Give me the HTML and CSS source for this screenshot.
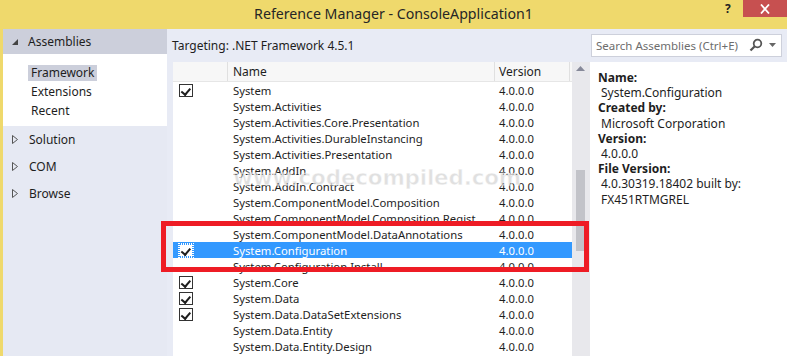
FILE: index.html
```html
<!DOCTYPE html>
<html>
<head>
<meta charset="utf-8">
<link rel="stylesheet" href="styles.css">
</head>
<body>
<div class="window">
  <div class="titlebar">
    <div class="title">Reference Manager - ConsoleApplication1</div>
    <div class="help">?</div>
    <div class="close">
      <svg width="12" height="10" viewBox="0 0 12 10"><path d="M2 0.5 L10 9.5 M10 0.5 L2 9.5" stroke="#fff" stroke-width="1.8"/></svg>
    </div>
  </div>
  <div class="main">
    <div class="sidebar">
      <div class="group-head"><span class="tri-down"></span>Assemblies</div>
      <div class="group-body">
        <div class="sub"><span class="sub-sel">Framework</span></div>
        <div class="sub"><span>Extensions</span></div>
        <div class="sub"><span>Recent</span></div>
      </div>
      <div class="group"><svg class="tri-right" width="6" height="9" viewBox="0 0 6 9"><path d="M0.5 0.5 L5.5 4.5 L0.5 8.5 Z" fill="none" stroke="#555" stroke-width="1"/></svg>Solution</div>
      <div class="group"><svg class="tri-right" width="6" height="9" viewBox="0 0 6 9"><path d="M0.5 0.5 L5.5 4.5 L0.5 8.5 Z" fill="none" stroke="#555" stroke-width="1"/></svg>COM</div>
      <div class="group"><svg class="tri-right" width="6" height="9" viewBox="0 0 6 9"><path d="M0.5 0.5 L5.5 4.5 L0.5 8.5 Z" fill="none" stroke="#555" stroke-width="1"/></svg>Browse</div>
    </div>
    <div class="center">
      <div class="topbar">
        <div class="targeting">Targeting: .NET Framework 4.5.1</div>
        <div class="search">
          <span class="placeholder">Search Assemblies (Ctrl+E)</span>
          <svg class="mag" width="14" height="14" viewBox="0 0 14 14"><circle cx="8.5" cy="5.5" r="3.8" fill="none" stroke="#555" stroke-width="1.8"/><path d="M5.8 8.2 L1.5 12.5" stroke="#555" stroke-width="2.2"/></svg>
          <svg class="drop" width="7" height="4" viewBox="0 0 7 4"><path d="M0 0 H7 L3.5 4 Z" fill="#666"/></svg>
        </div>
      </div>
      <div class="content">
        <div class="list">
          <div class="row head">
            <div class="c-check"></div>
            <div class="c-name">Name</div>
            <div class="c-ver">Version</div>
            <div class="c-rest"></div>
          </div>
          <div class="row"><div class="c-check"><span class="cb on"></span></div><div class="c-name">System</div><div class="c-ver">4.0.0.0</div></div>
          <div class="row"><div class="c-check"></div><div class="c-name">System.Activities</div><div class="c-ver">4.0.0.0</div></div>
          <div class="row"><div class="c-check"></div><div class="c-name">System.Activities.Core.Presentation</div><div class="c-ver">4.0.0.0</div></div>
          <div class="row"><div class="c-check"></div><div class="c-name">System.Activities.DurableInstancing</div><div class="c-ver">4.0.0.0</div></div>
          <div class="row"><div class="c-check"></div><div class="c-name">System.Activities.Presentation</div><div class="c-ver">4.0.0.0</div></div>
          <div class="row"><div class="c-check"></div><div class="c-name">System.AddIn</div><div class="c-ver">4.0.0.0</div></div>
          <div class="row"><div class="c-check"></div><div class="c-name">System.AddIn.Contract</div><div class="c-ver">4.0.0.0</div></div>
          <div class="row"><div class="c-check"></div><div class="c-name">System.ComponentModel.Composition</div><div class="c-ver">4.0.0.0</div></div>
          <div class="row"><div class="c-check"></div><div class="c-name">System.ComponentModel.Composition.Regist</div><div class="c-ver">4.0.0.0</div></div>
          <div class="row"><div class="c-check"></div><div class="c-name">System.ComponentModel.DataAnnotations</div><div class="c-ver">4.0.0.0</div></div>
          <div class="row sel"><div class="c-check"><span class="cb focus"></span></div><div class="c-name">System.Configuration</div><div class="c-ver">4.0.0.0</div></div>
          <div class="row"><div class="c-check"></div><div class="c-name">System.Configuration.Install</div><div class="c-ver">4.0.0.0</div></div>
          <div class="row"><div class="c-check"><span class="cb on"></span></div><div class="c-name">System.Core</div><div class="c-ver">4.0.0.0</div></div>
          <div class="row"><div class="c-check"><span class="cb on"></span></div><div class="c-name">System.Data</div><div class="c-ver">4.0.0.0</div></div>
          <div class="row"><div class="c-check"><span class="cb on"></span></div><div class="c-name">System.Data.DataSetExtensions</div><div class="c-ver">4.0.0.0</div></div>
          <div class="row"><div class="c-check"></div><div class="c-name">System.Data.Entity</div><div class="c-ver">4.0.0.0</div></div>
          <div class="row"><div class="c-check"></div><div class="c-name">System.Data.Entity.Design</div><div class="c-ver">4.0.0.0</div></div>
        </div>
        <div class="scrollbar">
          <svg class="up" width="9" height="5" viewBox="0 0 9 5"><path d="M0 5 L4.5 0 L9 5 Z" fill="#868999"/></svg>
          <div class="thumb"></div>
        </div>
        <div class="details">
          <div class="lbl">Name:</div>
          <div class="val">System.Configuration</div>
          <div class="lbl">Created by:</div>
          <div class="val">Microsoft Corporation</div>
          <div class="lbl">Version:</div>
          <div class="val">4.0.0.0</div>
          <div class="lbl">File Version:</div>
          <div class="val">4.0.30319.18402 built by:<br>FX451RTMGREL</div>
        </div>
      </div>
    </div>
  </div>
  <div class="watermark">www.codecompiled.com</div>
  <div class="redbox"></div>
</div>
</body>
</html>
```
FILE: styles.css
```css
* { box-sizing: border-box; }
html, body { margin: 0; padding: 0; }
body {
  width: 787px;
  height: 356px;
  overflow: hidden;
  font-family: "Noto Sans", "Open Sans", sans-serif;
  font-size: 11.3px;
  color: #1e1e1e;
  background: #fff;
}
.window {
  position: relative;
  width: 787px;
  height: 356px;
  display: flex;
  flex-direction: column;
}
.titlebar {
  height: 29px;
  background: #efd96c;
  position: relative;
  flex: none;
}
.title {
  position: absolute;
  left: 0;
  right: 0;
  top: 4px;
  text-align: center;
  font-size: 14.2px;
  color: #262626;
}
.help {
  position: absolute;
  left: 725px;
  top: 0px;
  font-weight: bold;
  font-size: 12px;
  color: #222;
}
.close {
  position: absolute;
  right: 0;
  top: 0;
  width: 44px;
  height: 17px;
  background: #c75050;
  display: flex;
  align-items: center;
  justify-content: center;
}
.main {
  flex: 1;
  display: flex;
  border-left: 3px solid #efd96c;
  min-height: 0;
}
.sidebar {
  width: 164px;
  flex: none;
  background: #e6e9f3;
}
.group-head {
  height: 25px;
  background: #cccfdb;
  display: flex;
  align-items: center;
  font-size: 12px;
}
.tri-down {
  width: 0;
  height: 0;
  border-left: 6px solid transparent;
  border-bottom: 6px solid #444;
  margin: 0 10px 0 9px;
}
.group-body {
  background: #fff;
  height: 72px;
  padding-top: 9px;
}
.sub {
  height: 19px;
  padding-left: 25px;
  display: flex;
  align-items: center;
  font-size: 12px;
}
.sub span { padding: 0 3px; line-height: 16px; }
.sub-sel { background: #cccfdb; }
.group {
  height: 27px;
  display: flex;
  align-items: center;
  font-size: 12px;
}
.tri-right {
  margin: 0 11px 0 9px;
  flex: none;
}
.center {
  flex: 1;
  display: flex;
  flex-direction: column;
  background: #e8ebf5;
  min-width: 0;
}
.topbar {
  height: 33px;
  display: flex;
  align-items: center;
  justify-content: space-between;
  padding-left: 5px;
  padding-right: 5px;
  flex: none;
}
.targeting { font-size: 12px; }
.search {
  width: 191px;
  height: 23px;
  background: #fff;
  border: 1px solid #cdd0db;
  display: flex;
  align-items: center;
  padding-left: 4px;
  margin-top: -1px;
}
.placeholder { color: #6d6d6d; font-size: 11.5px; flex: 1; }
.mag { margin-right: 6px; }
.drop { margin-right: 5px; }
.content {
  flex: 1;
  display: flex;
  min-height: 0;
  padding-left: 6px;
}
.list {
  width: 399px;
  flex: none;
  background: #fff;
  overflow: hidden;
}
.row {
  height: 16px;
  display: flex;
  align-items: center;
  white-space: nowrap;
}
.row.head {
  height: 20px;
  background: #f7f7f7;
  border-bottom: 1px solid #e6e6e6;
  font-size: 12px;
}
.row.head .c-check, .row.head .c-name, .row.head .c-ver { border-right: 1px solid #e0e0e0; height: 100%; display: flex; align-items: center; }
.c-check { width: 55px; flex: none; display: flex; align-items: center; padding-left: 6px; height: 100%; }
.c-name { width: 267px; flex: none; padding-left: 5px; overflow: hidden; }
.c-ver { width: 75px; flex: none; padding-left: 4px; }
.c-rest { flex: 1; }
.row.sel { background: #3399ff; color: #fff; }
.cb {
  width: 14px;
  height: 13px;
  border: 1px solid #333;
  background: #fff;
  position: relative;
  display: block;
}
.cb.on::after, .cb.focus::after {
  content: "";
  position: absolute;
  left: 2px;
  top: 2px;
  width: 7px;
  height: 4px;
  border-left: 2px solid #1e1e1e;
  border-bottom: 2px solid #1e1e1e;
  transform: rotate(-50deg) translate(-1px, 0px);
}
.cb.focus { border: 1px dotted #3399ff; background: #fff; outline: 1px dotted #fff; }
.scrollbar {
  width: 18px;
  flex: none;
  background: #e8e8ec;
  position: relative;
}
.up { position: absolute; left: 4px; top: 4px; }
.thumb {
  position: absolute;
  left: 4px;
  top: 108px;
  width: 9px;
  height: 81px;
  background: #c2c3c9;
}
.details {
  flex: 1;
  background: #fff;
  padding: 8px 0 0 8px;
  font-size: 12px;
  line-height: 15.2px;
}
.lbl { font-weight: bold; }
.val { padding-left: 3px; }
.watermark {
  position: absolute;
  left: 233px;
  top: 165px;
  font-family: "DejaVu Sans", sans-serif;
  font-size: 21.5px;
  font-weight: bold;
  letter-spacing: -0.2px;
  color: rgba(185, 185, 185, 0.45);
  -webkit-text-stroke: 1px rgba(255, 255, 255, 0.7);
  pointer-events: none;
}
.redbox {
  position: absolute;
  left: 161px;
  top: 221px;
  width: 428px;
  height: 51px;
  border: 5px solid #ee1c25;
  pointer-events: none;
}
```
